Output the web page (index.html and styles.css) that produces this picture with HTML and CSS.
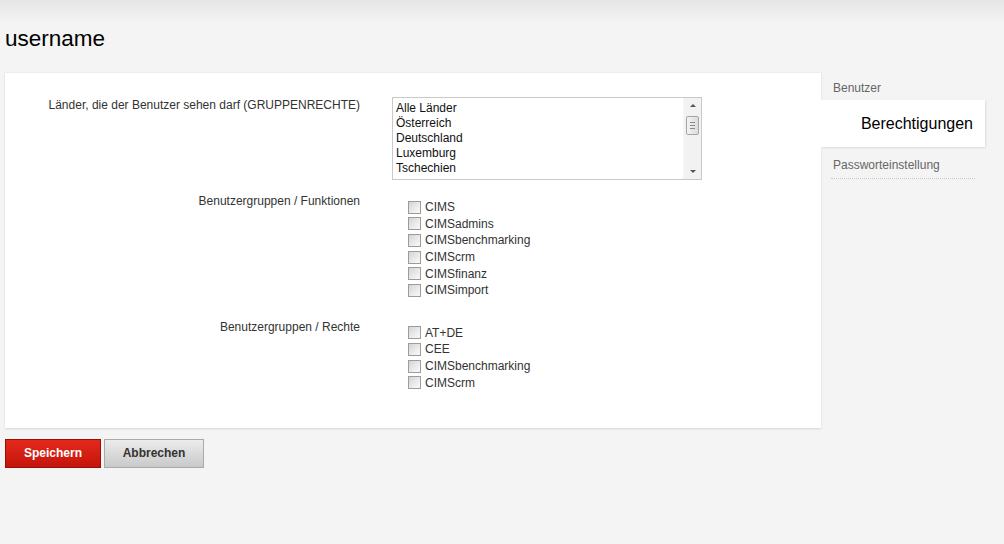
FILE: index.html
```html
<!DOCTYPE html>
<html lang="de">
<head>
  <meta charset="UTF-8">
  <title>username</title>
  <link rel="stylesheet" href="styles.css">
</head>
<body>
  <div class="page">
    <h1 class="title">username</h1>

    <div class="layout">
      <!-- Formular -->
      <div class="card">
        <div class="form-row">
          <div class="form-label">Länder, die der Benutzer sehen darf (GRUPPENRECHTE)</div>
          <div class="form-field">
            <div class="listbox">
              <ul class="listbox-items">
                <li>Alle Länder</li>
                <li>Österreich</li>
                <li>Deutschland</li>
                <li>Luxemburg</li>
                <li>Tschechien</li>
              </ul>
              <div class="scrollbar">
                <span class="arrow arrow-up"></span>
                <span class="thumb"></span>
                <span class="arrow arrow-down"></span>
              </div>
            </div>
          </div>
        </div>

        <div class="form-row">
          <div class="form-label">Benutzergruppen / Funktionen</div>
          <div class="form-field checklist">
            <label class="check"><input type="checkbox"> CIMS</label>
            <label class="check"><input type="checkbox"> CIMSadmins</label>
            <label class="check"><input type="checkbox"> CIMSbenchmarking</label>
            <label class="check"><input type="checkbox"> CIMScrm</label>
            <label class="check"><input type="checkbox"> CIMSfinanz</label>
            <label class="check"><input type="checkbox"> CIMSimport</label>
          </div>
        </div>

        <div class="form-row">
          <div class="form-label">Benutzergruppen / Rechte</div>
          <div class="form-field checklist">
            <label class="check"><input type="checkbox"> AT+DE</label>
            <label class="check"><input type="checkbox"> CEE</label>
            <label class="check"><input type="checkbox"> CIMSbenchmarking</label>
            <label class="check"><input type="checkbox"> CIMScrm</label>
          </div>
        </div>
      </div>

      <!-- Tabs -->
      <ul class="tabs">
        <li class="tab">Benutzer</li>
        <li class="tab active">Berechtigungen</li>
        <li class="tab dotted">Passworteinstellung</li>
      </ul>
    </div>

    <div class="actions">
      <button class="btn btn-save">Speichern</button>
      <button class="btn btn-cancel">Abbrechen</button>
    </div>
  </div>
</body>
</html>
```

FILE: styles.css
```css
html, body {
  margin: 0;
  padding: 0;
}

body {
  font-family: Arial, "Liberation Sans", sans-serif;
  font-size: 12px;
  color: #333;
  background: #f4f4f4 linear-gradient(#e6e6e6, #f4f4f4 24px) no-repeat;
  min-height: 544px;
}

.page {
  padding: 0 0 0 5px;
}

.title {
  margin: 0;
  padding-top: 25px;
  height: 72px;
  box-sizing: border-box;
  font-size: 22.5px;
  font-weight: normal;
  color: #000;
  line-height: 27px;
}

.layout {
  display: flex;
  align-items: flex-start;
}

.card {
  width: 816px;
  box-sizing: border-box;
  background: #fff;
  padding: 24px 0 30px;
  box-shadow: 0 1px 2px rgba(0, 0, 0, 0.12);
  border-top: 1px solid #ececec;
}

.form-row {
  display: grid;
  grid-template-columns: 355px 1fr;
  column-gap: 32px;
  margin-bottom: 13px;
}

.form-row:last-child {
  margin-bottom: 0;
}

.form-label {
  text-align: right;
  padding-top: 1px;
  line-height: 14px;
  color: #333;
}

/* listbox */
.listbox {
  width: 310px;
  height: 83px;
  box-sizing: border-box;
  border: 1px solid #c9c9c9;
  display: flex;
  background: #fff;
}

.listbox-items {
  list-style: none;
  margin: 0;
  padding: 3px 0 0 3px;
  flex: 1;
  line-height: 15px;
  color: #111;
}

.scrollbar {
  width: 17px;
  background: #f2f2f2;
  border-left: 1px solid #f7f7f7;
  position: relative;
}

.arrow {
  position: absolute;
  left: 6px;
  width: 0;
  height: 0;
  border-left: 3px solid transparent;
  border-right: 3px solid transparent;
}

.arrow-up {
  top: 6px;
  border-bottom: 3px solid #555;
}

.arrow-down {
  bottom: 6px;
  border-top: 3px solid #555;
}

.thumb {
  position: absolute;
  top: 18px;
  left: 2px;
  width: 11px;
  height: 17px;
  border: 1px solid #a5a5a5;
  border-radius: 2px;
  background:
    linear-gradient(#888, #888) 3px 5px / 5px 1px no-repeat,
    linear-gradient(#888, #888) 3px 8px / 5px 1px no-repeat,
    linear-gradient(#888, #888) 3px 11px / 5px 1px no-repeat,
    linear-gradient(90deg, #f4f4f4, #dcdcdc);
}

/* checkboxes */
.checklist {
  padding: 6px 0 7px 16px;
}

.check {
  display: flex;
  align-items: center;
  height: 16.6px;
  color: #333;
}

.check input {
  appearance: none;
  -webkit-appearance: none;
  width: 13px;
  height: 13px;
  margin: 0 4px 0 0;
  border: 1px solid #9c9c9c;
  background: linear-gradient(135deg, #d4d4d4, #f4f4f4 80%);
  box-sizing: border-box;
}

/* tabs */
.tabs {
  list-style: none;
  margin: 0;
  padding: 0;
  flex: 1;
}

.tab {
  color: #666;
  padding: 0 12px;
  height: 28px;
  line-height: 32px;
}

.tab.active {
  width: 164px;
  box-sizing: border-box;
  height: 47px;
  line-height: 47px;
  background: #fff;
  color: #000;
  font-size: 16px;
  text-align: right;
  padding-right: 12px;
  box-shadow: 1px 1px 2px rgba(0, 0, 0, 0.1);
}

.tab.dotted {
  width: 144px;
  box-sizing: border-box;
  margin-left: 10px;
  padding: 0 0 0 2px;
  height: 32px;
  line-height: 36px;
  border-bottom: 1px dotted #c8c8c8;
}

/* buttons */
.actions {
  display: flex;
  gap: 3px;
  margin-top: 11px;
}

.btn {
  height: 29px;
  font-family: Arial, "Liberation Sans", sans-serif;
  font-size: 12px;
  font-weight: bold;
  padding: 0;
  cursor: pointer;
}

.btn-save {
  width: 96px;
  color: #fff;
  border: 1px solid #9a0e08;
  background: linear-gradient(#e4291c, #c5140b);
}

.btn-cancel {
  width: 100px;
  color: #333;
  border: 1px solid #a9a9a9;
  background: linear-gradient(#ececec, #c9c9c9);
}
```
